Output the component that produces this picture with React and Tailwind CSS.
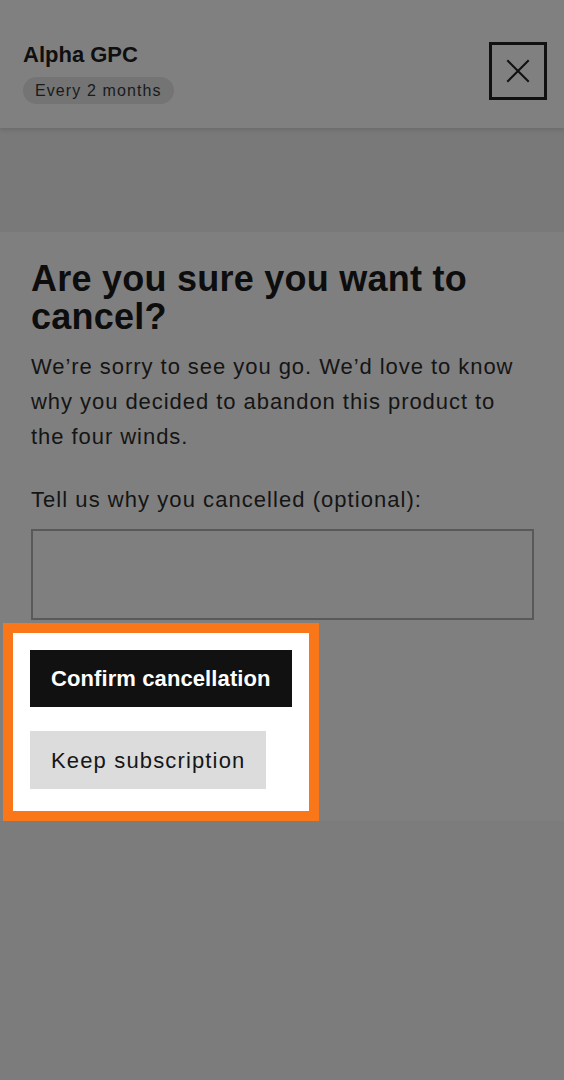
import React from 'react';

const font = { fontFamily: '"Liberation Sans", Arial, sans-serif' };

const CloseIcon = () => (
    <svg width="24" height="24" viewBox="0 0 24 24" fill="none" stroke="#111" strokeWidth="2" strokeLinecap="square">
        <path d="M2 2 L22 22 M22 2 L2 22" />
    </svg>
);

export default function App() {
    return (
        <div className="min-h-[1080px] w-[564px] bg-[#7c7c7c] flex flex-col" style={font}>
            {/* header */}
            <div className="h-[128px] bg-[#808080] flex items-start justify-between pl-[23px] pr-[17px] pt-[42px] shadow-[0_2px_4px_rgba(0,0,0,0.12)] relative z-10">
                <div className="flex flex-col items-start">
                    <h2 className="text-[22px] leading-[26px] font-bold text-[#0f0f0f]">Alpha GPC</h2>
                    <span className="mt-[9px] h-[27px] px-3 flex items-center rounded-full bg-[#747474] text-[16px] tracking-[1.1px] text-[#1a1a1a]">
                        Every 2 months
                    </span>
                </div>
                <button className="w-[58px] h-[58px] border-[3px] border-[#111] flex items-center justify-center">
                    <CloseIcon />
                </button>
            </div>

            <div className="h-[104px] bg-[#797979]" />

            {/* cancel panel */}
            <div className="bg-[#7f7f7f] pt-[28px] px-[31px] flex flex-col">
                <h1 className="text-[36px] leading-[38px] font-bold tracking-[0.25px] text-[#0d0d0d]">
                    Are you sure you want to cancel?
                </h1>
                <p className="mt-[13px] text-[22px] leading-[35px] tracking-[0.95px] text-[#151515]">
                    We’re sorry to see you go. We’d love to know why you decided to abandon this product to the four winds.
                </p>
                <label className="mt-[28px] text-[22px] leading-[35px] tracking-[1.05px] text-[#151515]">
                    Tell us why you cancelled (optional):
                </label>
                <textarea className="mt-[12px] h-[91px] w-[503px] border-2 border-[#595959] bg-transparent resize-none" />

                <div className="mt-[3px] -ml-[28px] w-[316px] border-[10px] border-[#f97619] bg-white pt-[17px] pl-[17px] pr-[8px] pb-[22px] flex flex-col items-start gap-[24px]">
                    <button className="h-[57px] px-[21px] bg-[#111111] text-white text-[22px] leading-[57px] font-bold tracking-[0.1px] whitespace-nowrap shrink-0">
                        Confirm cancellation
                    </button>
                    <button className="h-[58px] px-[21px] bg-[#dcdcdc] text-[#161616] text-[22px] tracking-[1.15px] whitespace-nowrap shrink-0">
                        Keep subscription
                    </button>
                </div>
            </div>
        </div>
    );
}
